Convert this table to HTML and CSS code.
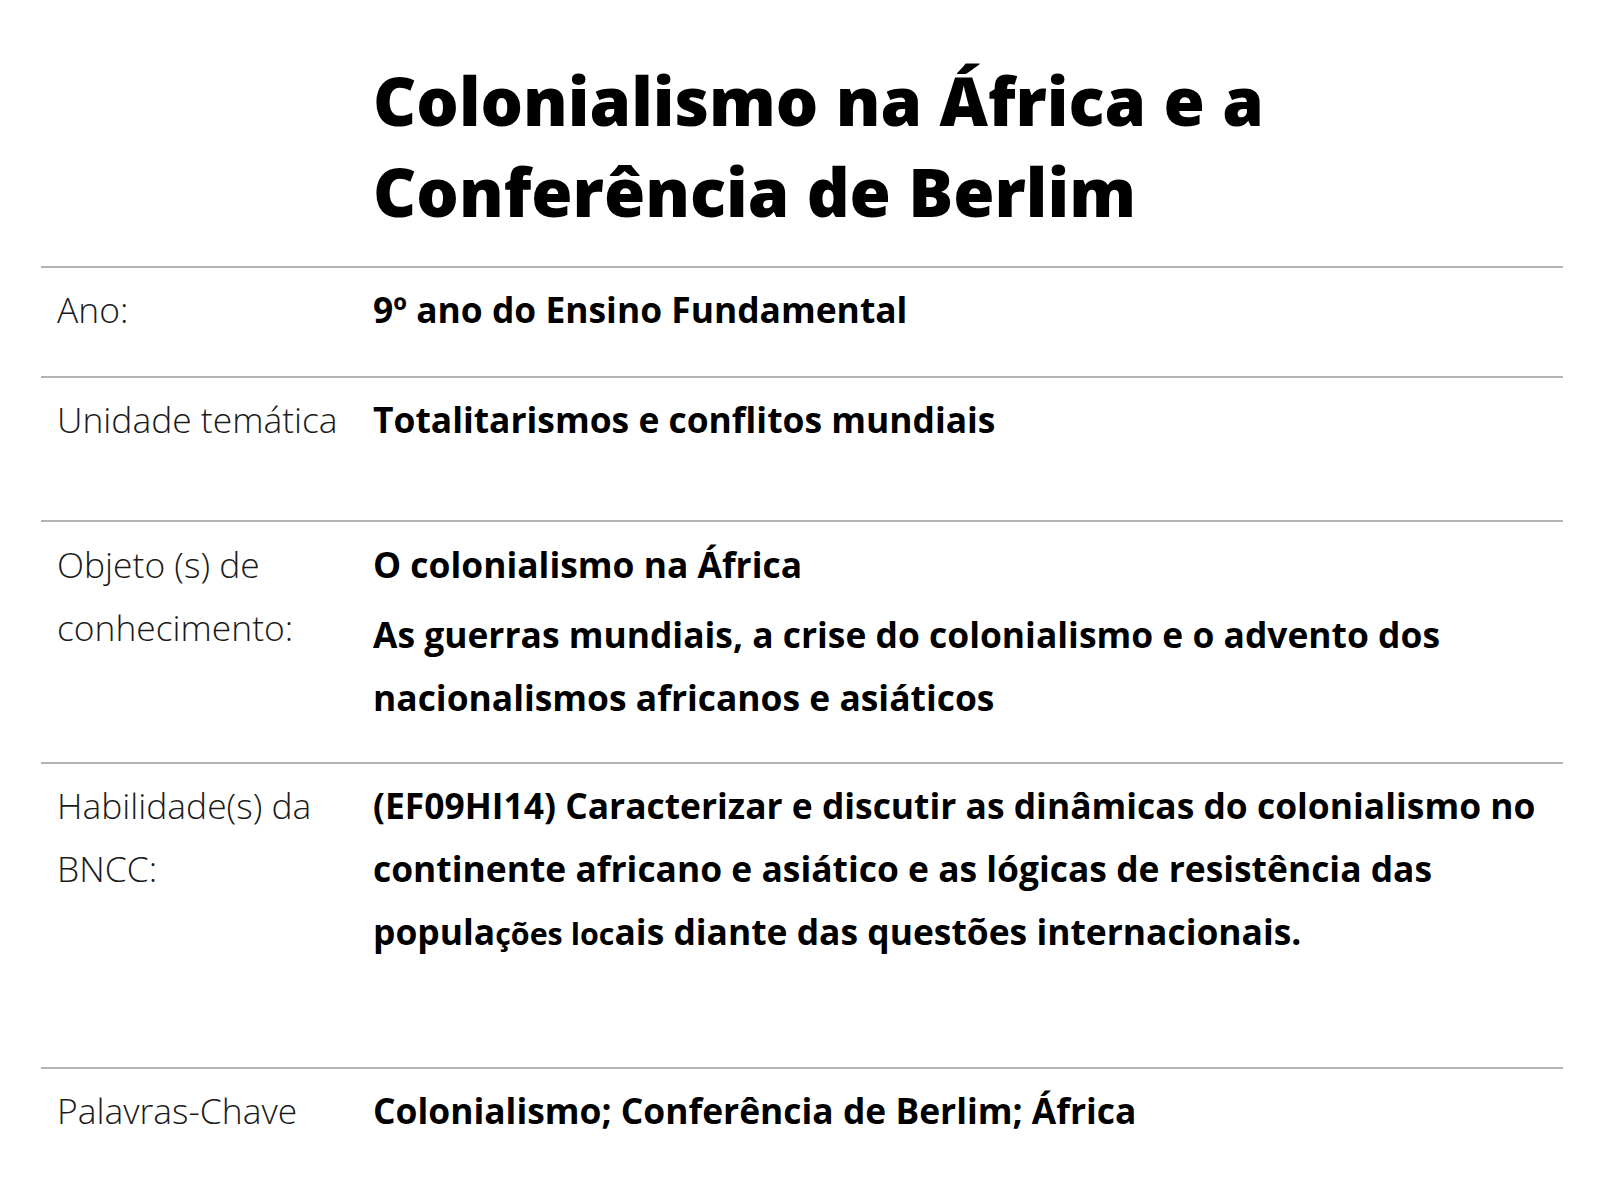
FILE: index.html
```html
<!DOCTYPE html>
<html lang="pt-BR">
<head>
<meta charset="utf-8">
<title>Colonialismo na África e a Conferência de Berlim</title>
<link rel="stylesheet" href="styles.css">
</head>
<body>
<main class="sheet">
  <h1 class="title">Colonialismo na África e a Conferência de Berlim</h1>
  <section class="table">
    <div class="row row-1">
      <div class="label">Ano:</div>
      <div class="value"><p>9º ano do Ensino Fundamental</p></div>
    </div>
    <div class="row row-2">
      <div class="label">Unidade temática</div>
      <div class="value"><p>Totalitarismos e conflitos mundiais</p></div>
    </div>
    <div class="row row-3">
      <div class="label">Objeto (s) de conhecimento:</div>
      <div class="value">
        <p>O colonialismo na África</p>
        <p>As guerras mundiais, a crise do colonialismo e o advento dos nacionalismos africanos e asiáticos</p>
      </div>
    </div>
    <div class="row row-4">
      <div class="label">Habilidade(s) da BNCC:</div>
      <div class="value"><p>(EF09HI14) Caracterizar e discutir as dinâmicas do colonialismo no continente africano e asiático e as lógicas de resistência das popula<span class="small">ções loc</span>ais diante das questões internacionais.</p></div>
    </div>
    <div class="row row-5">
      <div class="label">Palavras-Chave</div>
      <div class="value"><p>Colonialismo; Conferência de Berlim; África</p></div>
    </div>
  </section>
</main>
</body>
</html>
```

FILE: styles.css
```css
html, body {
  margin: 0;
  padding: 0;
  background: #ffffff;
}

body {
  font-family: "Open Sans", "Noto Sans", "Liberation Sans", sans-serif;
  color: #000000;
}

.sheet {
  width: 1522px;
  margin-left: 41px;
  padding-top: 55px;
}

.title {
  margin: 0 0 29px 332px;
  font-size: 66.8px;
  line-height: 91px;
  font-weight: 800;
  width: 960px;
}

.row {
  display: grid;
  grid-template-columns: 316px 1fr;
  padding: 10px 0 35px 16px;
  border-top: 2px solid #b4b4b4;
}

.row-2 { padding-bottom: 69px; }
.row-3 { padding-top: 11px; padding-bottom: 33px; }
.row-4 { padding-top: 10px; padding-bottom: 104px; }
.row-5 { padding-top: 10px; }

.label {
  font-size: 35.4px;
  line-height: 63px;
  font-weight: 300;
  color: #1a1a1a;
}

.value {
  font-size: 35.4px;
  line-height: 63px;
  font-weight: 700;
}

.value p {
  margin: 0;
}

.value p + p {
  margin-top: 7px;
}

.small {
  font-size: 0.86em;
  line-height: 1;
}
```
